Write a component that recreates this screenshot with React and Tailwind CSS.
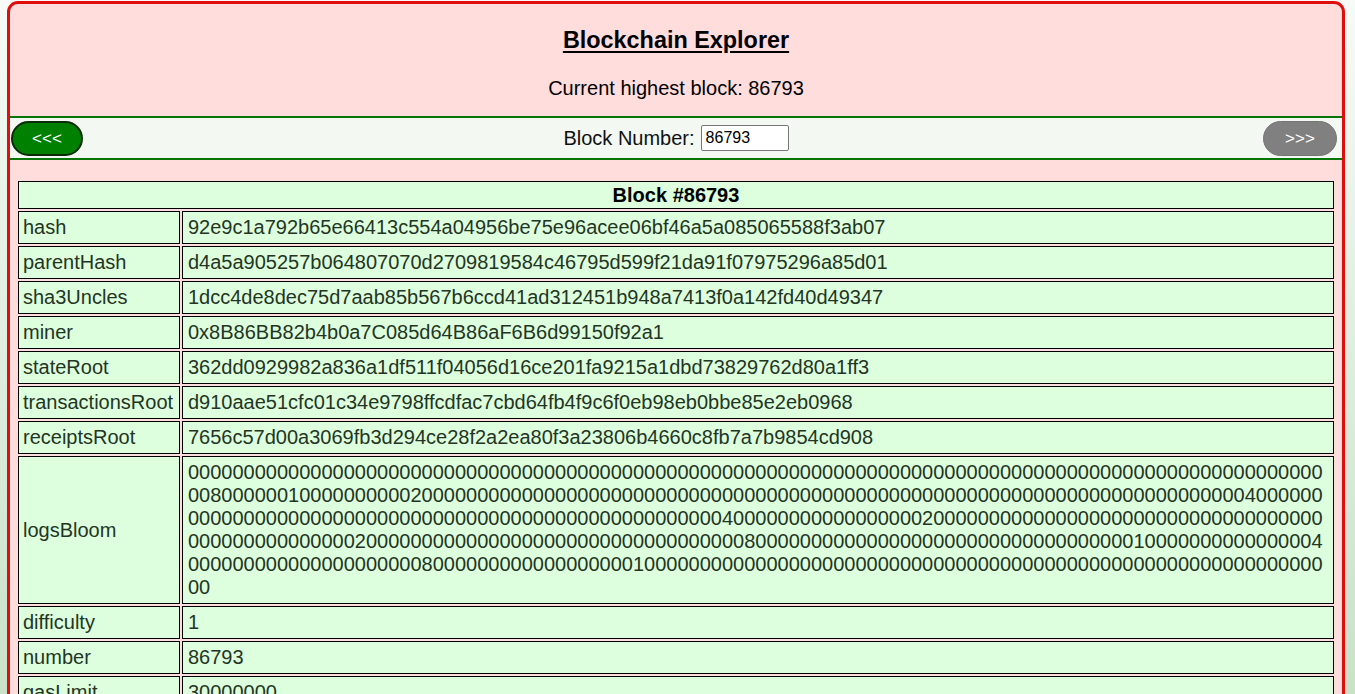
import React from 'react';

const z = (n) => '0'.repeat(n);

const logsBloom =
  z(102) +
  z(2) + '8' + z(6) + '1' + z(10) + '2' + z(74) + '4' + z(6) +
  z(48) + '4' + z(17) + '2' + z(35) +
  z(15) + '2' + z(34) + '8' + z(34) + '1' + z(15) + '4' +
  z(21) + '8' + z(18) + '1' + z(61) +
  '00';

const block = [
  ['hash', '92e9c1a792b65e66413c554a04956be75e96acee06bf46a5a085065588f3ab07'],
  ['parentHash', 'd4a5a905257b064807070d2709819584c46795d599f21da91f07975296a85d01'],
  ['sha3Uncles', '1dcc4de8dec75d7aab85b567b6ccd41ad312451b948a7413f0a142fd40d49347'],
  ['miner', '0x8B86BB82b4b0a7C085d64B86aF6B6d99150f92a1'],
  ['stateRoot', '362dd0929982a836a1df511f04056d16ce201fa9215a1dbd73829762d80a1ff3'],
  ['transactionsRoot', 'd910aae51cfc01c34e9798ffcdfac7cbd64fb4f9c6f0eb98eb0bbe85e2eb0968'],
  ['receiptsRoot', '7656c57d00a3069fb3d294ce28f2a2ea80f3a23806b4660c8fb7a7b9854cd908'],
  ['logsBloom', logsBloom],
  ['difficulty', '1'],
  ['number', '86793'],
  ['gasLimit', '30000000'],
  ['gasUsed', '21000'],
  ['timestamp', '1700000000'],
  ['extraData', '0x'],
  ['nonce', '0x0000000000000000'],
];

export default function App() {
  return (
    <div className="min-h-screen bg-[linear-gradient(to_bottom,#f7faf7_0px,#c9e1c9_694px)] pt-[1px] pl-[7px] pr-[10px] pb-[8px] font-['Liberation_Sans',Arial,sans-serif]">
      <div className="border-[3px] border-[#e00d0d] rounded-[11px] bg-[#ffdddd] overflow-hidden">
        {/* header */}
        <div className="flex flex-col items-center pt-[23px] pb-[16px] text-black">
          <h3 className="text-[23.4px] leading-[27px] font-bold underline underline-offset-[3px] decoration-[2px]">
            Blockchain Explorer
          </h3>
          <p className="mt-[23px] text-[20px] leading-[23px]">Current highest block: 86793</p>
        </div>

        {/* nav */}
        <div className="grid grid-cols-[1fr_auto_1fr] items-center h-[44px] border-y-2 border-[#087508] bg-[#f3f8f3] pl-[1px] pr-[5px]">
          <div className="flex justify-start">
            <button className="w-[72px] h-[35px] rounded-full bg-[#008000] border-2 border-[#0a2a0a] text-white text-[17px] leading-none">
              &lt;&lt;&lt;
            </button>
          </div>
          <div className="flex items-center gap-[6px] pl-[4px] text-[20px] text-[#111]">
            <span>Block Number:</span>
            <input
              defaultValue="86793"
              className="w-[88px] h-[26px] bg-white border border-[#767676] rounded-[2px] px-[4px] text-[16px] text-black outline-none"
            />
          </div>
          <div className="flex justify-end">
            <button className="w-[74px] h-[35px] rounded-full bg-[#808080] border border-[#747474] text-white text-[17px] leading-none">
              &gt;&gt;&gt;
            </button>
          </div>
        </div>

        {/* block table */}
        <div className="pt-[19px] px-[6px] pb-[10px]">
          <table className="w-full border-separate border-spacing-[2px] text-[20px] leading-[23px]">
            <thead>
              <tr>
                <th colSpan={2} className="h-[28px] p-0 border border-black bg-[#ddffdd] font-bold text-black">
                  Block #86793
                </th>
              </tr>
            </thead>
            <tbody>
              {block.map(([k, v]) => (
                <tr key={k}>
                  <td className="w-[162px] px-[4px] py-[4px] border border-black bg-[#ddffdd] text-[#243424] align-middle">
                    {k}
                  </td>
                  <td className="px-[5px] py-[4px] border border-black bg-[#ddffdd] text-[#243424] break-all">
                    {v}
                  </td>
                </tr>
              ))}
            </tbody>
          </table>
        </div>
      </div>
    </div>
  );
}
